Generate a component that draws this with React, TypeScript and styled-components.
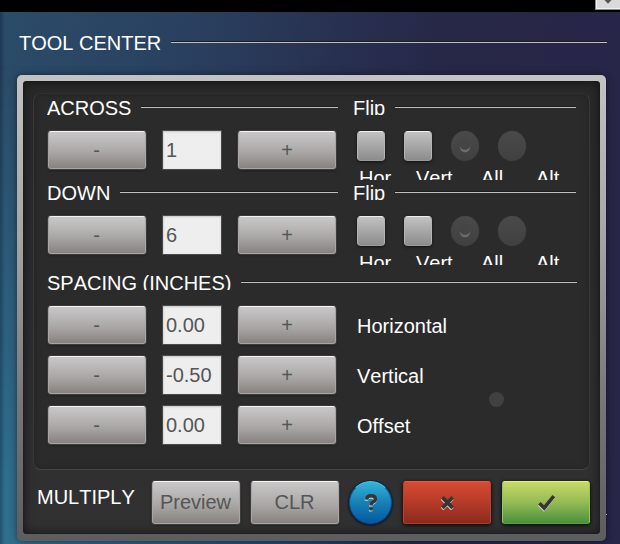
import React from 'react';
import styled, { createGlobalStyle, css } from 'styled-components';

const GlobalStyle = createGlobalStyle`
  *, *::before, *::after { box-sizing: border-box; }
  body { margin: 0; background: #000; overflow: hidden; }
  button, input { font: inherit; font-kerning: none; margin: 0; }
`;

const Screen = styled.div`
  width: 620px;
  height: 544px;
  display: flex;
  flex-direction: column;
  overflow: hidden;
  background: #000;
  color: #fff;
  font-family: 'Liberation Sans', Arial, sans-serif;
  font-size: 20px;
  font-kerning: none;
  line-height: 22px;
`;

const TopBar = styled.header`
  height: 12px;
  flex: none;
  display: flex;
  justify-content: flex-end;
  align-items: flex-start;
`;

const CornerButton = styled.button`
  width: 25px;
  height: 10px;
  padding: 0;
  display: flex;
  justify-content: center;
  align-items: flex-start;
  border: solid #8a8a8a;
  border-width: 0 0 1px 1px;
  background: #dadada;
  box-shadow: inset 1px -1px 0 #f2f2f2;
`;

const Desk = styled.main`
  position: relative;
  flex: 1;
  min-height: 0;
  padding: 20px 14px 0 17px;
  display: flex;
  flex-direction: column;
  background: linear-gradient(97deg, #2b4c68 0%, #2a4060 28%, #28304f 50%, #272747 66%, #272548 100%);
  &::before {
    content: '';
    position: absolute;
    inset: 0;
    background: linear-gradient(90deg, #2f708e, #2a5c88 25%, #214a76 45%, transparent 68%);
    mask-image: linear-gradient(180deg, transparent 10%, #000 90%);
  }
  &::after {
    content: '';
    position: absolute;
    inset: 0;
    background: linear-gradient(90deg, rgba(0, 10, 30, 0.3), transparent 5px);
  }
  & > * { position: relative; }
`;

const Legend = styled.div`
  display: flex;
  align-items: flex-start;
  gap: 10px;
  height: 19px;
`;

const LegendText = styled.span<{ $width?: number }>`
  flex: none;
  width: ${p => (p.$width ? `${p.$width}px` : 'auto')};
  height: 18px;
  overflow: hidden;
  white-space: nowrap;
`;

const Rule = styled.span`
  flex: 1;
  height: 2px;
  margin-top: 9px;
  border-top: 1px solid #1c1c1e;
  border-bottom: 1px solid #bfc0ba;
`;

const TitleRow = styled(Legend)`
  padding: 0 0 0 2px;
  margin-right: -1px;
`;

const Frame = styled.section`
  width: 589px;
  height: 466px;
  margin-top: 24px;
  padding: 6px;
  flex: none;
  border-radius: 5px;
  background: linear-gradient(180deg, #c4c3c4 0%, #a5a5a5 35%, #777 70%, #5d5d5e 100%);
  box-shadow: 0 0 7px rgba(0, 0, 0, 0.5);
`;

const FrameInner = styled.div`
  height: 453px;
  padding: 12px 10px 0;
  border-radius: 4px;
  background: linear-gradient(180deg, #292929, #313131);
  box-shadow: inset 0 0 12px rgba(0, 0, 0, 0.6), inset 0 0 1px #111;
`;

const Panel = styled.div`
  height: 377px;
  padding: 3px 13px 0 14px;
  border: 1px solid #393939;
  border-top-color: #2f2f2f;
  border-bottom-color: #444;
  border-radius: 8px;
  background: #2b2b2b;
  box-shadow: inset 0 0 6px rgba(0, 0, 0, 0.22);
`;

const Repeat = styled.div`
  display: grid;
  grid-template-columns: 291px 223px;
  column-gap: 15px;
  height: 85px;
  margin-left: -1px;
`;

const Stepper = styled.div`
  display: grid;
  grid-template-columns: 100px 60px 100px;
  column-gap: 15px;
  height: 40px;
  align-items: stretch;
`;

const RepeatControls = styled.div`
  margin-top: 14px;
`;

const gray = css`
  border: 1px solid #a9a5a4;
  border-top-color: #f4f4f4;
  background: linear-gradient(180deg, #c9c8c8 0%, #aaa8a7 55%, #878280 100%);
  box-shadow: 0 0 0 1px #3e3b3a, 0 1px 3px rgba(0, 0, 0, 0.5);
`;

const StepButton = styled.button<{ $minus?: boolean }>`
  ${gray}
  margin: 1px;
  padding: ${p => (p.$minus ? '0 1px 1px 0' : '0')};
  border-radius: 3px;
  color: #555;
  text-align: center;
  line-height: 20px;
`;

const Field = styled.input`
  width: 60px;
  height: 40px;
  min-width: 0;
  padding: 0 0 0 3px;
  border: 1px solid #4a4a4a;
  border-radius: 0;
  outline: none;
  background: #eee;
  box-shadow: inset 0 1px 2px #c8c8c8, inset 1px 0 1px #ddd;
  color: #555;
`;

const Toggles = styled.div`
  display: flex;
  gap: 19px;
  margin: 15px 0 0 4px;
  height: 30px;
`;

const Check = styled.button`
  ${gray}
  width: 28px;
  height: 30px;
  padding: 0;
  border-radius: 4px;
  border-color: #b5b5b5;
  border-top-color: #eee;
  border-bottom-color: #999;
  background: linear-gradient(180deg, #c2c2c2, #8c8c8c);
  box-shadow: 0 1px 3px #111;
`;

const Radio = styled.button`
  width: 28px;
  height: 30px;
  padding: 0;
  border: 0;
  border-radius: 50%;
  background: linear-gradient(180deg, #4a4a4a, #404040);
  box-shadow: 0 0 1px #4a4a4a;
  svg { display: block; }
`;

const Captions = styled.div`
  display: flex;
  height: 14px;
  margin: 5px 0 0 6px;
  overflow: hidden;
`;

const Caption = styled.span<{ $w: number }>`
  width: ${p => p.$w}px;
  flex: none;
  height: 22px;
  margin-top: 1px;
`;

const Spacing = styled.div`
  margin: 5px -1px 0 -1px;
`;

const SpacingRows = styled.div`
  position: relative;
  display: grid;
  row-gap: 10px;
  margin-top: 14px;
`;

const SpacingRow = styled.div`
  display: grid;
  grid-template-columns: 290px 1fr;
  column-gap: 20px;
`;

const SpacingName = styled.span`
  padding-top: 10px;
`;

const Dot = styled.span`
  position: absolute;
  left: 442px;
  top: 87px;
  width: 15px;
  height: 15px;
  border-radius: 50%;
  background: #414141;
`;

const Actions = styled.footer`
  display: flex;
  height: 44px;
  margin: 11px -10px 0 4px;
  & > * { flex: none; }
`;

const ActionsTitle = styled.span`
  width: 115px;
  padding-top: 5px;
`;

const TextButton = styled.button`
  ${gray}
  width: 88px;
  height: 43px;
  margin-right: 11px;
  padding: 0 1px 1px 0;
  border-radius: 3px;
  color: #555;
`;

const HelpButton = styled.button`
  width: 43px;
  height: 43px;
  margin: 0 11px 0 -1px;
  padding: 0;
  display: grid;
  place-items: center;
  border: 1px solid #0b4f94;
  border-top-color: #4cc4e2;
  border-radius: 50%;
  background: linear-gradient(180deg, #34b4d6, #1781b6 50%, #0458a0);
  box-shadow: 0 0 0 1px #0a2448, 0 1px 3px #000;
`;

const IconButton = styled.button<{ $kind: 'cancel' | 'accept' }>`
  width: 88px;
  height: 43px;
  margin-right: 11px;
  padding: 0;
  display: grid;
  place-items: center;
  border: 1px solid;
  border-radius: 3px;
  box-shadow: 0 1px 4px #000;
  ${p => p.$kind === 'cancel'
    ? css`
        border-color: #f2583a #c0402a #b23a26;
        background: linear-gradient(180deg, #d84a31, #b93c29 45%, #8c2a1d);
      `
    : css`
        border-color: #e0f07e #9ac45a #5c9f43;
        background: linear-gradient(180deg, #c8d966, #94bb55 50%, #4b913c);
      `}
`;

const Speck = styled.i`
  && { position: absolute; }
  left: 606px;
  top: 502px;
  width: 1px;
  height: 1px;
  background: #b5b8a4;
`;

const GLYPHS = {
  help: 'M1.6 5.6 Q1.8 1.7 6 1.7 Q10.4 1.7 10.4 5 Q10.4 7 8.2 8 Q6 9 6 11.6',
  cancel: 'M1.4 1.4 L11.6 12 M11.6 1.4 L1.4 12',
  accept: 'M1.4 8.2 L6.2 13 L15.8 1.2',
};

const Glyph = ({ name, w, h, stroke }: { name: keyof typeof GLYPHS; w: number; h: number; stroke: number }) => (
  <svg width={w} height={h} viewBox={`0 0 ${w} ${h}`} fill="none" strokeWidth={stroke} overflow="visible">
    {[{ c: '#e4ddd2', x: -0.3, y: 1 }, { c: '#353535', x: 0, y: 0 }].map(l => (
      <g key={l.c} transform={`translate(${l.x} ${l.y})`}>
        <path d={GLYPHS[name]} stroke={l.c} />
        {name === 'help' && <rect x="4.2" y="13.4" width="3.6" height="3.2" rx="1" fill={l.c} />}
      </g>
    ))}
  </svg>
);

const StepControl = ({ value }: { value: string }) => (
  <Stepper>
    <StepButton $minus>-</StepButton>
    <Field defaultValue={value} />
    <StepButton>+</StepButton>
  </Stepper>
);

const RepeatSection = ({ title, value }: { title: string; value: string }) => (
  <Repeat>
    <div>
      <Legend><LegendText>{title}</LegendText><Rule /></Legend>
      <RepeatControls><StepControl value={value} /></RepeatControls>
    </div>
    <div>
      <Legend><LegendText $width={32}>Flip</LegendText><Rule /></Legend>
      <Toggles>
        <Check />
        <Check />
        <Radio>
          <svg width="28" height="30" viewBox="0 0 28 30">
            <circle cx="14" cy="16" r="5.2" fill="#6c6c6c" />
            <circle cx="14" cy="13.4" r="5.4" fill="#454545" />
          </svg>
        </Radio>
        <Radio />
      </Toggles>
      <Captions>
        <Caption $w={57}>Hor</Caption>
        <Caption $w={65}>Vert</Caption>
        <Caption $w={55}>All</Caption>
        <Caption $w={40}>Alt</Caption>
      </Captions>
    </div>
  </Repeat>
);

export default function App() {
  return (
    <Screen>
      <GlobalStyle />
      <TopBar>
        <CornerButton>
          <svg width="10" height="5" viewBox="0 0 10 5"><path d="M1.5 0H8.5L5 3.8Z" fill="#555" /></svg>
        </CornerButton>
      </TopBar>
      <Desk>
        <TitleRow><LegendText>TOOL CENTER</LegendText><Rule /></TitleRow>
        <Frame>
          <FrameInner>
            <Panel>
              <RepeatSection title="ACROSS" value="1" />
              <RepeatSection title="DOWN" value="6" />
              <Spacing>
                <Legend><LegendText>SPACING (INCHES)</LegendText><Rule /></Legend>
                <SpacingRows>
                  {[['0.00', 'Horizontal'], ['-0.50', 'Vertical'], ['0.00', 'Offset']].map(([value, name]) => (
                    <SpacingRow key={name}>
                      <StepControl value={value} />
                      <SpacingName>{name}</SpacingName>
                    </SpacingRow>
                  ))}
                  <Dot />
                </SpacingRows>
              </Spacing>
            </Panel>
            <Actions>
              <ActionsTitle>MULTIPLY</ActionsTitle>
              <TextButton>Preview</TextButton>
              <TextButton>CLR</TextButton>
              <HelpButton><Glyph name="help" w={12} h={17} stroke={3.4} /></HelpButton>
              <IconButton $kind="cancel"><Glyph name="cancel" w={13} h={13} stroke={3.7} /></IconButton>
              <IconButton $kind="accept"><Glyph name="accept" w={17} h={15} stroke={3.6} /></IconButton>
            </Actions>
          </FrameInner>
        </Frame>
        <Speck />
      </Desk>
    </Screen>
  );
}
